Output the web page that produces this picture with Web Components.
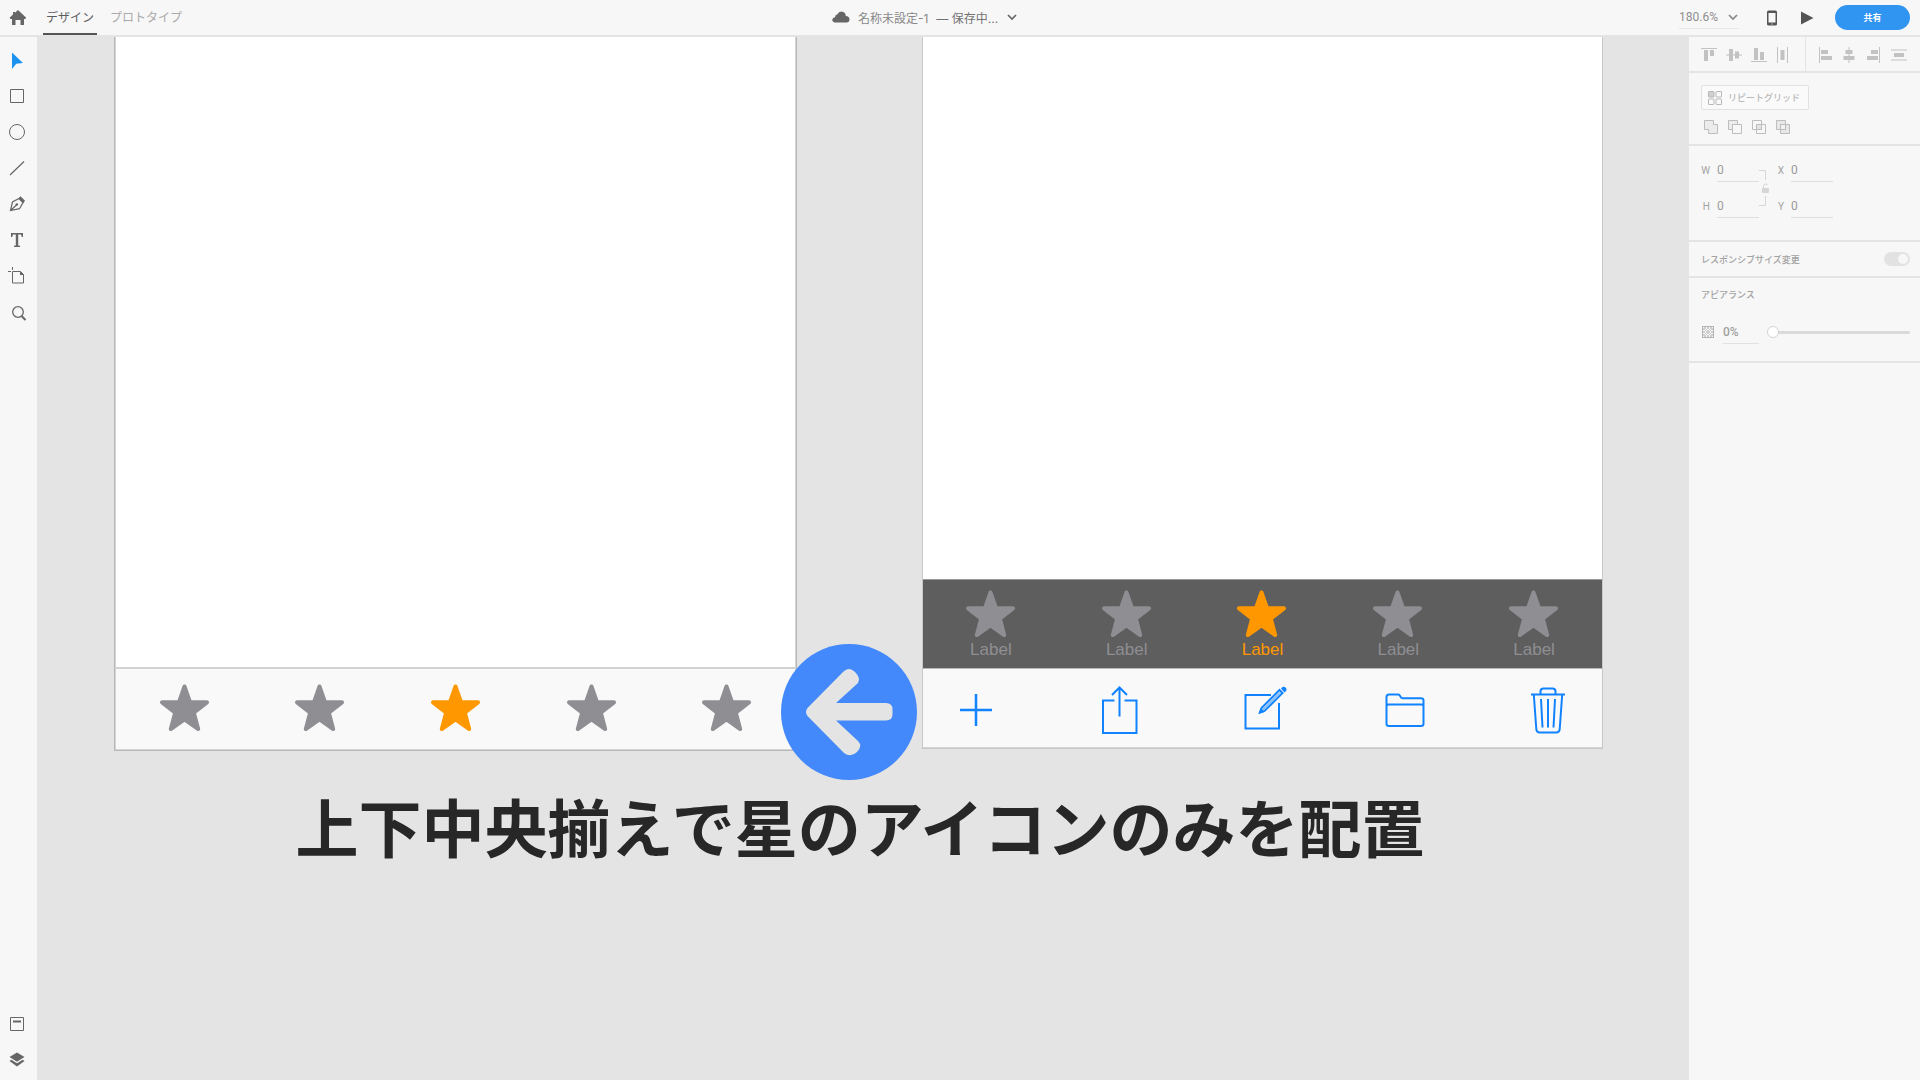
<!DOCTYPE html>
<html lang="ja">
<head>
<meta charset="utf-8">
<title>名称未設定-1</title>
<style>
html, body { height: 100%; margin: 0; }
body { font-family: Roboto, "Noto Sans CJK JP", sans-serif; font-size: 12px; color: #6e6e6e; background: #e4e4e4; }
</style>
</head>
<body>
<xd-app></xd-app>
<script>
const ICONS = {
  home: ['18 16', '<path fill="currentColor" d="M9 0 17 7.500 16.500 9H15v5.500q0 .5-.5.5H11.500v-5h-5v5H3.500q-.5 0-.5-.5V9H1.200L.8 7.500 4 4.600V2h2v.800Z"/>'],
  cloud: ['18 12', '<path fill="currentColor" d="M3 11.500Q.2 11.300.3 8.600.6 6.400 3 6.200 3.200 3.600 5.400 3.300 6.600.5 9.500.5q4 .3 4.300 4.400 3.600.4 3.700 3.500-.1 2.900-3 3.100Z"/>'],
  chevron: ['12 8', '<path fill="none" stroke="currentColor" stroke-width="1.700" d="m2 2 4 4 4-4"/>'],
  phone: ['12 16', '<path fill="currentColor" fill-rule="evenodd" d="M2.500.500h7q1.500 0 1.500 1.500v12q0 1.500-1.500 1.500h-7Q1 15.500 1 14V2Q1 .5 2.500.5ZM2.500 3v9.500h7V3Zm3 10.500v1h1v-1Z"/>'],
  play: ['14 16', '<path fill="currentColor" d="M1 1.500 13.500 8 1 14.500Z"/>'],
  select: ['18 18', '<path fill="#1c92f0" d="M4 1.500v16.500l4.200-5.200 6.800-.8Z"/>'],
  rect: ['18 18', '<path fill="none" stroke="currentColor" d="M2.500 2.500h13v13h-13z"/>'],
  ellipse: ['18 18', '<circle cx="9" cy="9" r="7.500" fill="none" stroke="currentColor"/>'],
  line: ['18 18', '<path stroke="currentColor" stroke-width="1.200" d="M2 16 16 2.500"/>'],
  pen: ['18 18', '<path fill="none" stroke="currentColor" stroke-width="1.200" d="M2.500 15.500 4.500 7l6.500-3.500L15 7.500l-3.500 6.200ZM2.500 15.500 8.500 10"/><circle cx="8.800" cy="9.500" r="1.300" fill="currentColor"/><path fill="currentColor" d="m10.500 3.200 2-2L17 5.800l-1.800 2.500Z"/>'],
  text: ['18 18', '<path fill="currentColor" d="M3 2h12v4h-1.200l-.8-2.400h-2.800v10.800l1.800.4V16H6v-1.200l1.800-.4V3.600H5L4.200 6H3Z"/>'],
  artboard: ['18 18', '<path fill="none" stroke="currentColor" d="M4.500 4.500h8l3 3v8.500h-11ZM4.500 0v3M0 4.500h3"/><path fill="currentColor" d="M12 4v4h4Z"/>'],
  search: ['18 18', '<circle cx="10" cy="9" r="5.300" fill="none" stroke="currentColor" stroke-width="1.300"/><path stroke="currentColor" stroke-width="2" d="m13.500 13 4 4"/>'],
  assets: ['18 18', '<path fill="none" stroke="currentColor" d="M2.500 2.500h13v13h-13z"/><path fill="currentColor" d="M5 5.500h8v2H5z"/>'],
  layers: ['18 18', '<path fill="currentColor" d="m9 1.500 7.500 4.600L9 10.700 1.500 6.100ZM1.500 10l1.800-1.200L9 12.300l5.700-3.500 1.800 1.200L9 15.500Z"/>'],
  alTop: ['16 16', '<path fill="currentColor" d="M0 1h16v1H0zM3 3h4v11H3zM9 3h4v6H9z"/>'],
  alMid: ['16 16', '<path fill="currentColor" d="M0 7.500h16v1H0zM3 2h4v12H3zM9 4.500h4v7H9z"/>'],
  alBottom: ['16 16', '<path fill="currentColor" d="M0 14h16v1H0zM3 1h4v12H3zM9 5h4v8H9z"/>'],
  alDistH: ['16 16', '<path fill="currentColor" d="M2 0h1v16H2zM12 0h1v16h-1zM5.500 3h4v10h-4z"/>'],
  alLeft: ['16 16', '<path fill="currentColor" d="M2 0h1v16H2zM4 3h7v4H4zM4 9h11v4H4z"/>'],
  alCenter: ['16 16', '<path fill="currentColor" d="M7.500 0h1v16h-1zM4.500 3h7v4h-7zM2.500 9h11v4h-11z"/>'],
  alRight: ['16 16', '<path fill="currentColor" d="M13 0h1v16h-1zM5 3h7v4H5zM1 9h11v4H1z"/>'],
  alDistV: ['16 16', '<path fill="currentColor" d="M0 2.500h16v1H0zM0 12.500h16v1H0zM3 6h10v4H3z"/>'],
  grid: ['14 14', '<g fill="none" stroke="currentColor"><rect x=".5" y=".5" width="5.500" height="5.500" rx=".5" fill="#d0d0d0"/><rect x="8" y=".5" width="5.500" height="5.500" rx=".5"/><rect x=".5" y="8" width="5.500" height="5.500" rx=".5"/><rect x="8" y="8" width="5.500" height="5.500" rx=".5"/></g>'],
  union: ['16 16', '<path fill="#ececec" stroke="currentColor" d="M1.500 1.500h9v4h4v9h-9v-4h-4Z"/>'],
  subtract: ['16 16', '<path fill="#ececec" stroke="currentColor" d="M1.500 1.500h9v4h-5v5h-4Z"/><path fill="#f7f7f7" stroke="currentColor" d="M5.500 5.500h9v9h-9z"/>'],
  intersect: ['16 16', '<path fill="none" stroke="currentColor" d="M1.500 1.500h9v9h-9zM5.500 5.500h9v9h-9z"/><path fill="#e4e4e4" stroke="currentColor" d="M5.500 5.500h5v5h-5z"/>'],
  exclude: ['16 16', '<path fill="#e8e8e8" stroke="currentColor" d="M1.500 1.500h9v9h-9zM5.500 5.500h9v9h-9z"/><path fill="#f2f2f2" stroke="currentColor" d="M5.500 5.500h5v5h-5z"/>'],
  lock: ['12 38', '<g fill="none" stroke="#d6d6d6"><path d="M0 1.500h6.500V11M0 36.500h6.500V27"/><path d="M4.500 20v-3q.3-2 2.500-2 1.500 0 2 1.200"/></g><rect x="3" y="19" width="7" height="5" rx="1" fill="#d6d6d6"/>'],
  opacity: ['14 14', '<rect x="1.500" y="1.500" width="11" height="11" fill="#f7f7f7" stroke="#b4b4b4"/><path fill="none" stroke="#c4c4c4" stroke-width=".8" d="m2 5 3-3M2 8l6-6M2 11l9-9M3 12l9-9M6 12l6-6M9 12l3-3M2 9l3 3M2 6l6 6M2 3l9 9M3 2l9 9M6 2l6 6M9 2l3 3"/>'],
  star: ['50 48', '<path fill="currentColor" stroke="currentColor" stroke-width="4" stroke-linejoin="round" d="m24.500 2.500 5.600 15.800H47L33.800 28.600 38.200 45 24.500 35.300 10.800 45l4.400-16.400L2 18.300h16.900Z"/>'],
  plus: ['48 48', '<path stroke="currentColor" stroke-width="2.500" d="M8 24h32M24 8v32"/>'],
  share: ['48 48', '<g fill="none" stroke="currentColor" stroke-width="2"><path d="M19.500 14.500H8V47h33.500V14.500H29.500M24.500 2v28.500M17 9l7.500-7.500L32 9"/></g>'],
  compose: ['48 48', '<g fill="none" stroke="currentColor" stroke-width="2"><path d="M33 9H7.500v33.500h33.500V17"/><path d="m22 26.500 1.500-4.500L41.500 4l3 3-18 18Z"/><path d="m23 25.500 19-19" stroke-width="1"/></g><path fill="currentColor" d="m43 2.500 1.500-1.500q2-1 3.200.8 1.500 1.500.3 3.200L46.500 6.500ZM20.500 28l2-6 4 4Z"/>'],
  folder: ['48 48', '<path fill="none" stroke="currentColor" stroke-width="2" d="M5.500 38V11q0-2.500 2.500-2.500h9q1.500 0 2.200 1.700.8 2 2.300 2H40q2.500 0 2.500 2.300V38q0 2-2.500 2H8q-2.500 0-2.500-2ZM5.500 20.500q0-2 2-2h33q2 0 2 2"/>'],
  trash: ['48 48', '<path fill="none" stroke="currentColor" stroke-width="2" d="M7 8.500h34M16.500 8V5.500q0-3 3-3h9q3 0 3 3V8M9.800 8.500 12.300 43q.2 3.500 3.500 3.500h16.400q3.300 0 3.500-3.500L38.200 8.500M17 13l1.500 28.500M24 13v28.500M31 13l-1.500 28.500"/>'],
  arrow: ['136 136', '<circle cx="68" cy="68" r="68" fill="#4389fb"/><path fill="#e4e4e4" d="M26.500 64 62 28q6-6 12 0t3 11L55 59h50q6.500 0 6.500 6.500v4.500q0 6.500-6.500 6.500H55l22 20.500q5 5-1 11t-13 1L26.500 72q-3-4 0-8Z"/>']
};

const define = (name, html, setup) => {
  const tpl = document.createElement('template');
  tpl.innerHTML = '<style>*{box-sizing:border-box}button,input,select{font:inherit;color:inherit;background:none;border:0;padding:0;margin:0}</style>' + html;
  customElements.define(name, class extends HTMLElement {
    constructor() {
      super();
      this.attachShadow({ mode: 'open' }).append(tpl.content.cloneNode(true));
    }
    connectedCallback() { if (setup) setup(this, this.shadowRoot); }
  });
};

define('xd-icon', '<style>:host{display:block;flex:none}svg{display:block;overflow:visible}</style><svg aria-hidden="true"></svg>', (el, root) => {
  const [size, body] = ICONS[el.getAttribute('name')];
  const [w, h] = size.split(' ');
  const svg = root.querySelector('svg');
  svg.setAttribute('viewBox', `0 0 ${w} ${h}`);
  svg.setAttribute('width', w);
  svg.setAttribute('height', h);
  svg.innerHTML = body;
});

define('xd-header', `<style>
:host{display:flex;justify-content:space-between;height:37px;padding:0 10px 0 9px;background:#f7f7f7;border-bottom:2px solid #e4e4e4}
div,nav{display:flex;align-items:center}
button{display:flex;align-items:center;justify-content:center}
nav{align-items:stretch}
.home{width:18px;margin-right:16px;color:#666}
.tab{padding:0 3px 1px;height:35px;color:#aaa;border-bottom:2px solid transparent}
.tab.on{color:#5c5c5c;border-color:#555;margin-right:10px}
.title{gap:8px;padding-bottom:1px;margin-right:14px;color:#888;font-family:Inter,"Noto Sans CJK JP",sans-serif}
.title span + span{color:#737373}
.title button,.title xd-icon{color:#666}
.zoom{border-bottom:1px solid #e8e8e8;margin-right:27px;height:22px;width:60px;color:#999}
.zoom select{appearance:none;flex:1;min-width:0;color:#8e8e8e}
.zoom xd-icon{color:#888}
.dev{width:12px;margin-right:22px;color:#555}
.play{width:14px;margin-right:21px;color:#555}
.share{width:75px;height:25px;border-radius:13px;background:#2f95f1;color:#fff;font-weight:700;font-size:9px}
</style>
<nav aria-label="モード"><button class="home" aria-label="ホーム"><xd-icon name="home"></xd-icon></button><button class="tab on">デザイン</button><button class="tab">プロトタイプ</button></nav>
<div class="title"><xd-icon name="cloud"></xd-icon><span>名称未設定-1</span><span>— 保存中...</span><button aria-label="メニュー"><xd-icon name="chevron"></xd-icon></button></div>
<div class="right"><div class="zoom"><select aria-label="ズーム"><option>180.6%</option></select><xd-icon name="chevron"></xd-icon></div>
<button class="dev" aria-label="デバイス"><xd-icon name="phone"></xd-icon></button><button class="play" aria-label="再生"><xd-icon name="play"></xd-icon></button><button class="share">共有</button></div>`);

define('xd-tools', `<style>
:host{display:flex;flex-direction:column;justify-content:space-between;padding:5px 0 2px;background:#f7f7f7;color:#666}
button{display:flex;width:34px;height:36px;align-items:center;justify-content:center}
</style><div></div><div></div>`, (el, root) => {
  const groups = [['select', 'rect', 'ellipse', 'line', 'pen', 'text', 'artboard', 'search'], ['assets', 'layers']];
  root.querySelectorAll('div').forEach((d, i) => {
    d.innerHTML = groups[i].map(n => `<button aria-label="${n}"><xd-icon name="${n}"></xd-icon></button>`).join('');
  });
});

define('xd-tab', `<style>
:host{display:flex;flex:1;flex-direction:column;align-items:center;color:#8e8e93;font:17px/24px "Liberation Sans",sans-serif}
:host([active]){color:#ff9800}
</style><xd-icon name="star"></xd-icon><slot></slot>`);

define('xd-artboard', `<style>
:host{display:block;flex:1;background:#d4d4d4;border:1px solid #c8c8c8;border-top:0}
.page{height:var(--page-height);background:#fff}
</style><div class="page"></div><slot></slot>`);

define('xd-bar', `<style>
:host{display:flex;background:#f9f9f9;border-top:2px solid #d2d2d2;height:82px;padding:15px 0 0 1px}
:host([kind=dark]){background:#5e5e5e;border-top:1px solid #999;height:89px;padding:10px 0 0}
:host([kind=tools]){color:#1283ff;border-top:1px solid #b8b8b8;height:79px;padding:17px 30px 0 29px;justify-content:space-between}
</style><slot></slot>`);

define('xd-canvas', `<style>
:host{display:block;min-width:0;background:#e4e4e4;overflow:hidden}
.boards{position:relative;display:flex;align-items:flex-start;gap:125px;padding:0 86px 0 77px}
.boards>:first-child{--page-height:630px;border-color:#b8b8b8;padding:0 1px 1px}
.boards>:nth-child(2){--page-height:542px;padding:0 0 1px}
.arrow{position:absolute;left:calc(50% - 14px);bottom:-29px;transform:translateX(-50%)}
p{margin:28px 6px 0 0;text-align:center;font:700 63px/92px "Noto Sans CJK JP",sans-serif;color:#272727}
</style>
<div class="boards">
<xd-artboard><xd-bar><xd-tab></xd-tab><xd-tab></xd-tab><xd-tab active></xd-tab><xd-tab></xd-tab><xd-tab></xd-tab></xd-bar></xd-artboard>
<xd-artboard><xd-bar kind="dark"><xd-tab>Label</xd-tab><xd-tab>Label</xd-tab><xd-tab active>Label</xd-tab><xd-tab>Label</xd-tab><xd-tab>Label</xd-tab></xd-bar>
<xd-bar kind="tools"><xd-icon name="plus"></xd-icon><xd-icon name="share"></xd-icon><xd-icon name="compose"></xd-icon><xd-icon name="folder"></xd-icon><xd-icon name="trash"></xd-icon></xd-bar></xd-artboard>
<xd-icon class="arrow" name="arrow"></xd-icon>
</div>
<p>上下中央揃えで星のアイコンのみを配置</p>`);

define('xd-field', `<style>
:host{display:flex}
label{display:flex;flex:1;align-items:center;gap:7px;font-size:10px;color:#a3a3a3}
span{width:9px;text-align:right}
input{width:42px;height:24px;border-bottom:1px solid #dedede;font-size:12px;color:#999}
</style><label><span></span><input value="0" disabled></label>`, (el, root) => {
  root.querySelector('span').textContent = el.getAttribute('label');
});

define('xd-inspector', `<style>
:host{display:block;background:#f7f7f7;color:#a3a3a3;font-size:9px;font-weight:500}
section{border-bottom:2px solid #e4e4e4;padding:0 10px 0 12px}
.align{display:flex;height:36px;padding:0;color:#c2c2c2}
.align div{display:flex;flex:1;align-items:center;justify-content:space-between;padding:2px 13px 0 12px}
.align div+div{border-left:1px solid #e4e4e4;padding:2px 13px 0 11px}
button{display:flex;align-items:center}
.ops{height:73px;padding-top:12px}
.repeat{gap:6px;width:108px;height:25px;padding:0 6px;border:1px solid #e2e2e2;border-radius:2px;background:#fafafa;color:#b8b8b8;white-space:nowrap}
.row{display:flex;gap:8px;margin-top:9px;padding-left:2px;color:#bdbdbd}
.size{display:grid;grid-template-columns:58px 10px 58px;column-gap:3px;row-gap:12px;align-content:start;height:96px;padding-top:12px;font-weight:400}
.size xd-icon{grid-row:1/3;grid-column:2;align-self:start;margin:11px 0 0 -3px}
.size xd-field:nth-of-type(even){grid-column:3}
.resp{display:flex;align-items:center;justify-content:space-between;height:36px}
.resp label{display:contents}
input[type=checkbox]{appearance:none;width:26px;height:14px;border-radius:7px;background:#e2e2e2;padding:2px}
input[type=checkbox]::before{content:"";display:block;width:10px;height:10px;border-radius:5px;background:#f7f7f7;margin-left:12px}
.look{height:85px;padding-top:9px}
h2{margin:0;font:500 9px/16px Roboto,"Noto Sans CJK JP",sans-serif}
.op{display:flex;align-items:center;margin-top:17px}
.op input[type=text]{width:36px;height:24px;margin:0 8px 0 8px;border-bottom:1px solid #e2e2e2;font-size:12px;color:#a0a0a0}
input[type=range]{appearance:none;flex:1;min-width:0;height:14px}
input[type=range]::-webkit-slider-runnable-track{height:3px;border-radius:2px;background:#dadada}
input[type=range]::-webkit-slider-thumb{appearance:none;width:12px;height:12px;margin-top:-5px;border-radius:6px;background:#fff;border:1px solid #d4d4d4}
</style>
<section class="align"><div><xd-icon name="alTop"></xd-icon><xd-icon name="alMid"></xd-icon><xd-icon name="alBottom"></xd-icon><xd-icon name="alDistH"></xd-icon></div>
<div><xd-icon name="alLeft"></xd-icon><xd-icon name="alCenter"></xd-icon><xd-icon name="alRight"></xd-icon><xd-icon name="alDistV"></xd-icon></div></section>
<section class="ops"><button class="repeat" disabled><xd-icon name="grid"></xd-icon>リピートグリッド</button>
<div class="row"><xd-icon name="union"></xd-icon><xd-icon name="subtract"></xd-icon><xd-icon name="intersect"></xd-icon><xd-icon name="exclude"></xd-icon></div></section>
<section class="size"><xd-field label="W"></xd-field><xd-field label="X"></xd-field><xd-field label="H"></xd-field><xd-field label="Y"></xd-field><xd-icon name="lock"></xd-icon></section>
<section class="resp"><label>レスポンシブサイズ変更<input type="checkbox" disabled></label></section>
<section class="look"><h2>アピアランス</h2><div class="op"><xd-icon name="opacity"></xd-icon><input type="text" aria-label="不透明度" value="0%" disabled><input type="range" aria-label="不透明度" value="0" disabled></div></section>`);

define('xd-app', `<style>
:host{display:grid;min-height:100vh;grid-template:auto 1fr / 37px minmax(0,1fr) 231px}
xd-header{grid-column:1/-1}
</style><xd-header></xd-header><xd-tools></xd-tools><xd-canvas></xd-canvas><xd-inspector></xd-inspector>`);
</script>
</body>
</html>
